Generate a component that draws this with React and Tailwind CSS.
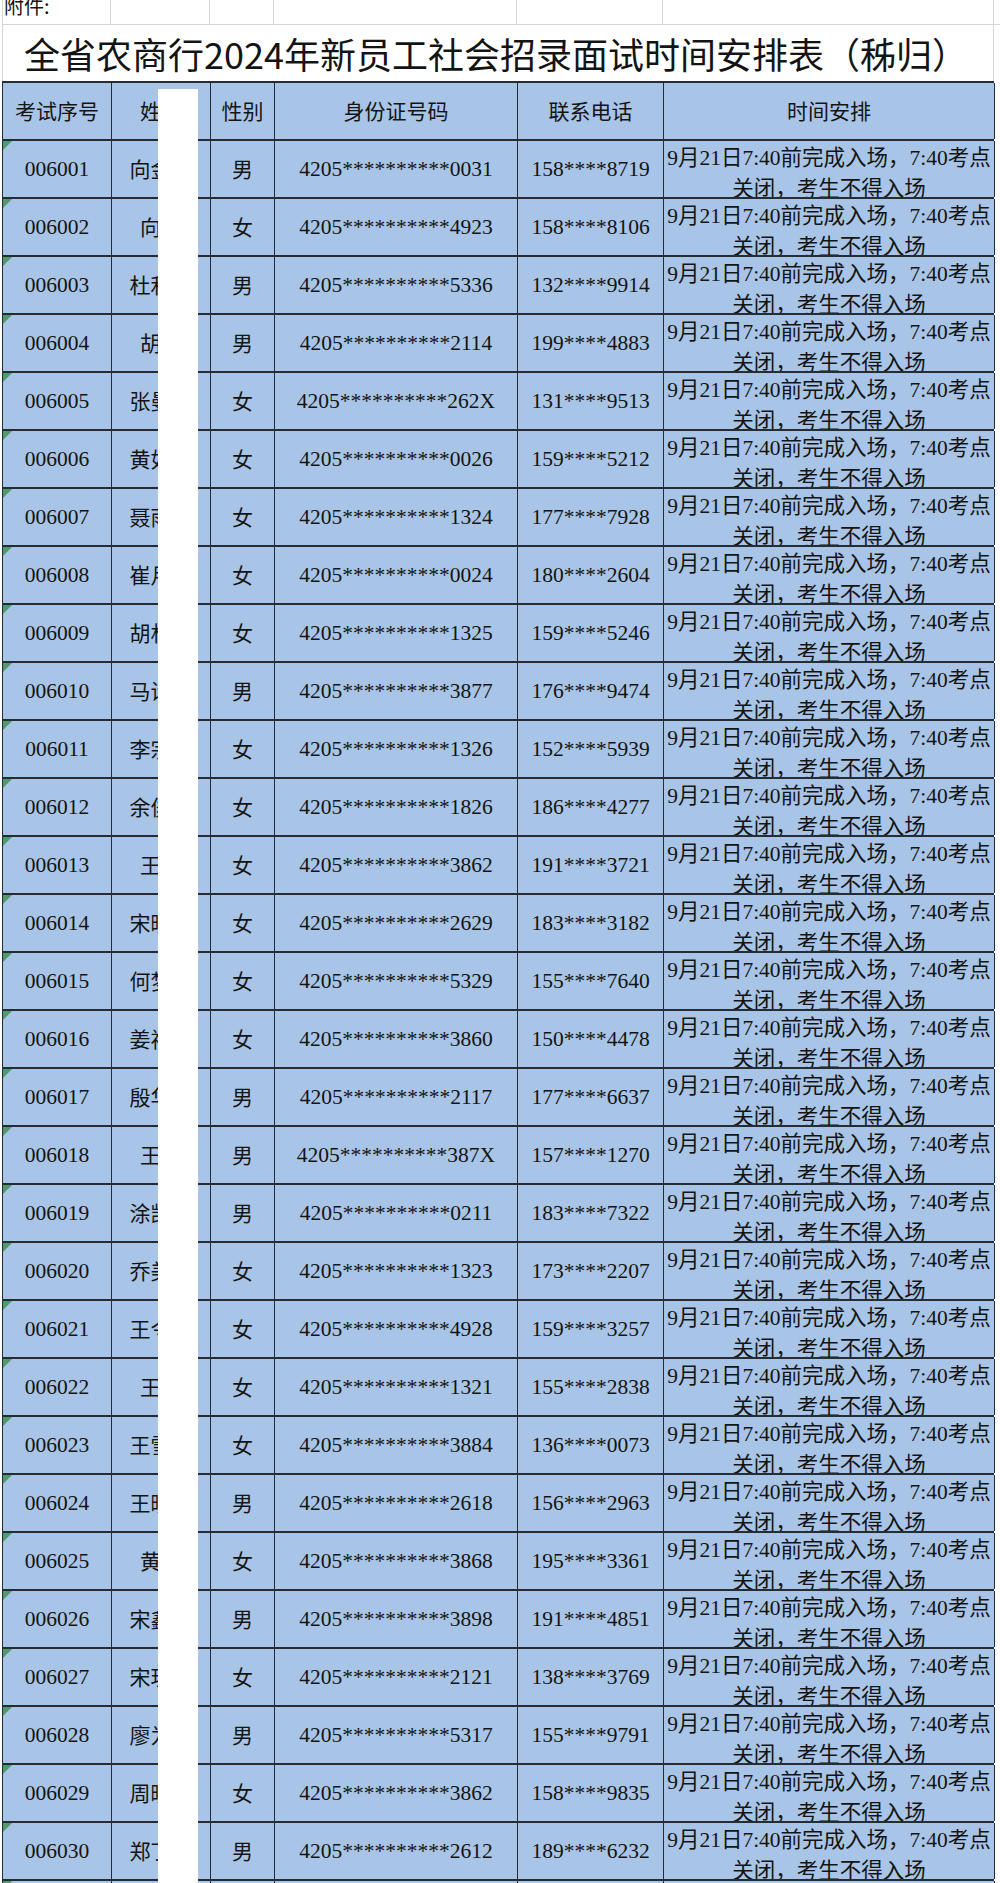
import React from 'react';

const cols = "grid grid-cols-[109px_99px_64px_243px_146px_331px]";

// 序号, 姓名, 性别, 身份证尾号, 电话前3位, 电话后4位
const rows = [
  ['006001', '向金某', '男', '0031', '158', '8719'],
  ['006002', '向某', '女', '4923', '158', '8106'],
  ['006003', '杜利某', '男', '5336', '132', '9914'],
  ['006004', '胡某', '男', '2114', '199', '4883'],
  ['006005', '张曼某', '女', '262X', '131', '9513'],
  ['006006', '黄如某', '女', '0026', '159', '5212'],
  ['006007', '聂雨某', '女', '1324', '177', '7928'],
  ['006008', '崔月某', '女', '0024', '180', '2604'],
  ['006009', '胡林某', '女', '1325', '159', '5246'],
  ['006010', '马诗某', '男', '3877', '176', '9474'],
  ['006011', '李宗某', '女', '1326', '152', '5939'],
  ['006012', '余俊某', '女', '1826', '186', '4277'],
  ['006013', '王某', '女', '3862', '191', '3721'],
  ['006014', '宋晓某', '女', '2629', '183', '3182'],
  ['006015', '何梦某', '女', '5329', '155', '7640'],
  ['006016', '姜祎某', '女', '3860', '150', '4478'],
  ['006017', '殷华某', '男', '2117', '177', '6637'],
  ['006018', '王某', '男', '387X', '157', '1270'],
  ['006019', '涂凯某', '男', '0211', '183', '7322'],
  ['006020', '乔美某', '女', '1323', '173', '2207'],
  ['006021', '王令某', '女', '4928', '159', '3257'],
  ['006022', '王某', '女', '1321', '155', '2838'],
  ['006023', '王雪某', '女', '3884', '136', '0073'],
  ['006024', '王晓某', '男', '2618', '156', '2963'],
  ['006025', '黄某', '女', '3868', '195', '3361'],
  ['006026', '宋鑫某', '男', '3898', '191', '4851'],
  ['006027', '宋玥某', '女', '2121', '138', '3769'],
  ['006028', '廖为某', '男', '5317', '155', '9791'],
  ['006029', '周晓某', '女', '3862', '158', '9835'],
  ['006030', '郑丁某', '男', '2612', '189', '6232'],
  ['006031', '某某', '女', '0000', '000', '0000'],
];

function Cell({ children, className = '' }) {
  return (
    <div className={`flex items-center justify-center border-r border-[#262c33] overflow-hidden ${className}`}>
      {children}
    </div>
  );
}

export default function App() {
  return (
    <div className="relative w-[1000px] h-[1883px] overflow-hidden bg-white text-[#141414] font-['Noto_Sans_CJK_SC',sans-serif]">
      <div className="pl-[2px]">
        {/* 附件 row */}
        <div className={`${cols} h-[25px] border-b border-[#d6d6d6]`}>
          <div className="border-l border-r border-[#d6d6d6] overflow-hidden">
            <div className="-mt-[7px] pl-[1px] text-[20px] leading-[26px]">附件:</div>
          </div>
          <div className="border-r border-[#d6d6d6]" />
          <div className="border-r border-[#d6d6d6]" />
          <div className="border-r border-[#d6d6d6]" />
          <div className="border-r border-[#d6d6d6]" />
          <div className="border-r border-[#d6d6d6]" />
        </div>

        {/* Title */}
        <div className="w-[992px] h-[56px] flex items-center pl-[21px] border-l border-r border-[#d6d6d6] text-[36px] leading-none whitespace-nowrap">
          全省农商行2024年新员工社会招录面试时间安排表（秭归）
        </div>

        {/* Table */}
        <div className="w-[992px] border-t-2 border-l border-[#262c33] bg-[#a8c4e6]">
          <div className={`${cols} h-[58px] border-b-2 border-[#262c33] text-[21px]`}>
            <Cell>考试序号</Cell>
            <Cell>姓名</Cell>
            <Cell>性别</Cell>
            <Cell>身份证号码</Cell>
            <Cell>联系电话</Cell>
            <Cell>时间安排</Cell>
          </div>

          {rows.map(([no, name, sex, id, p1, p2]) => (
            <div key={no} className={`${cols} h-[58px] border-b-2 border-[#262c33] text-[21px]`}>
              <Cell className="relative text-[21.5px] font-['Liberation_Serif','Noto_Sans_CJK_SC',serif]">
                <span className="absolute top-0 left-0 w-0 h-0 border-t-[9px] border-r-[9px] border-t-[#4f9a6c] border-r-transparent" />
                {no}
              </Cell>
              <Cell className="whitespace-nowrap">{name}</Cell>
              <Cell>{sex}</Cell>
              <Cell className="text-[21.5px] font-['Liberation_Serif',serif] whitespace-nowrap">{`4205**********${id}`}</Cell>
              <Cell className="text-[21.5px] font-['Liberation_Serif',serif] whitespace-nowrap">{`${p1}****${p2}`}</Cell>
              <div className="border-r border-[#262c33] overflow-hidden pt-[2px] text-center text-[21.5px] leading-[31px] whitespace-nowrap font-['Liberation_Serif','Noto_Sans_CJK_SC',serif]">
                <div>9月21日7:40前完成入场，7:40考点</div>
                <div>关闭，考生不得入场</div>
              </div>
            </div>
          ))}
        </div>
      </div>

      {/* redaction strip over the name column */}
      <div className="absolute left-[158px] top-[89px] bottom-0 w-[40px] bg-white" />
    </div>
  );
}
